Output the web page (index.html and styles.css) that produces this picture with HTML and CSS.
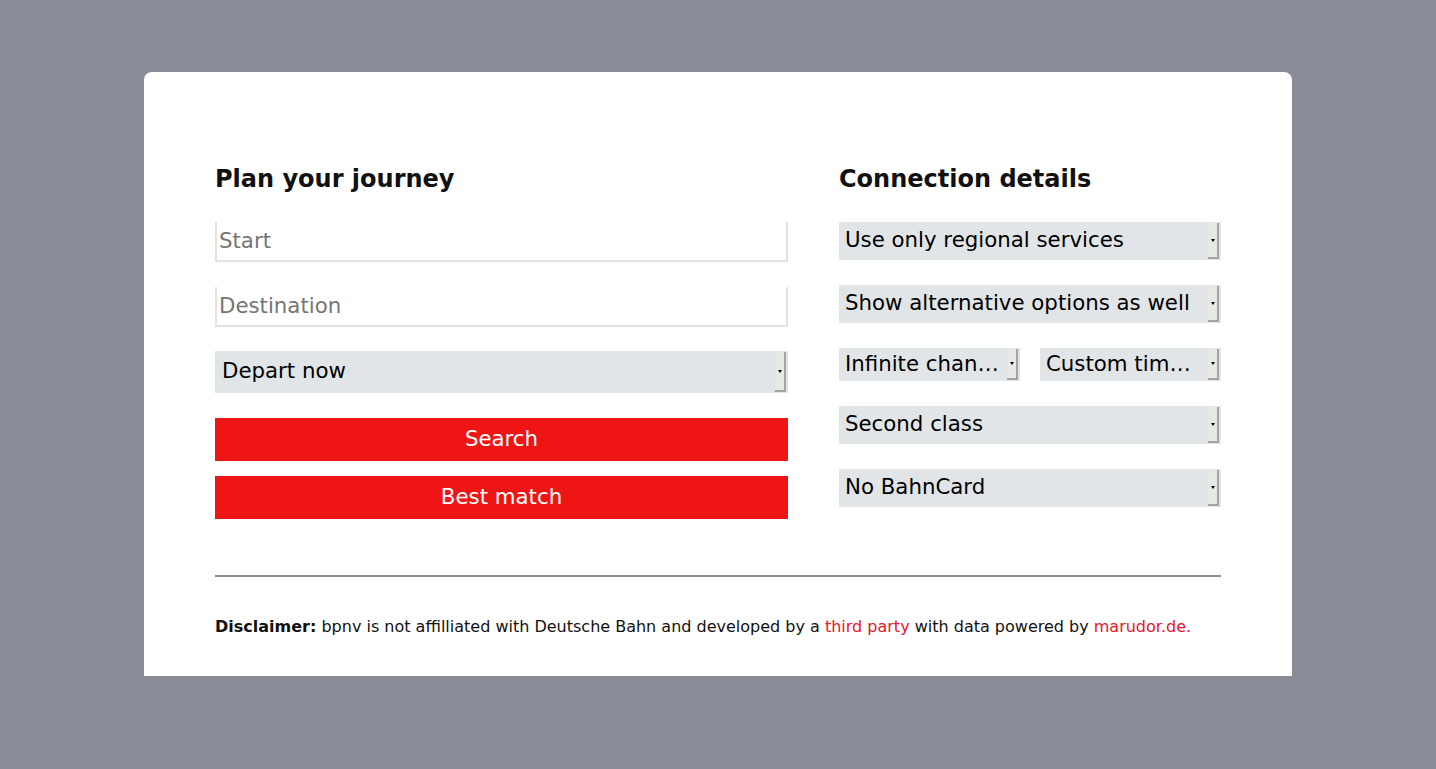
FILE: index.html
```html
<!DOCTYPE html>
<html>
<head>
<meta charset="utf-8">
<link rel="stylesheet" href="styles.css">
</head>
<body>
<main class="card">
  <div class="columns">
    <section class="plan">
      <h2 class="title">Plan your journey</h2>
      <input class="field" type="text" placeholder="Start">
      <input class="field field-last" type="text" placeholder="Destination">
      <div class="dd dd-big"><select class="sel"><option>Depart now</option></select><span class="arrow"></span></div>
      <button class="btn btn-search">Search</button>
      <button class="btn">Best match</button>
    </section>
    <section class="details">
      <h2 class="title">Connection details</h2>
      <div class="dd"><select class="sel"><option>Use only regional services</option></select><span class="arrow"></span></div>
      <div class="dd"><select class="sel"><option>Show alternative options as well</option></select><span class="arrow"></span></div>
      <div class="pair">
        <div class="dd dd-small"><select class="sel"><option>Infinite changes</option></select><span class="arrow"></span></div>
        <div class="dd dd-small"><select class="sel"><option>Custom time to change</option></select><span class="arrow"></span></div>
      </div>
      <div class="dd"><select class="sel"><option>Second class</option></select><span class="arrow"></span></div>
      <div class="dd"><select class="sel"><option>No BahnCard</option></select><span class="arrow"></span></div>
    </section>
  </div>
  <hr class="rule">
  <p class="disclaimer"><b>Disclaimer:</b> bpnv is not affilliated with Deutsche Bahn and developed by a <a href="#">third party</a> with data powered by <a href="#">marudor.de.</a></p>
</main>
</body>
</html>
```
FILE: styles.css
```css
html, body {
  margin: 0;
  padding: 0;
  background: #898c97;
  font-family: "DejaVu Sans", sans-serif;
  height: 100%;
}
body {
  padding-top: 72px;
  box-sizing: border-box;
}
.card {
  width: 1148px;
  margin: 0 auto;
  background: #fff;
  border-radius: 8px 8px 0 0;
  box-sizing: border-box;
  padding: 92px 71px 39px 71px;
}
.columns {
  display: flex;
  gap: 51px;
}
.plan {
  width: 573px;
  display: flex;
  flex-direction: column;
}
.details {
  width: 382px;
  display: flex;
  flex-direction: column;
}
.title {
  margin: 0 0 28px 0;
  font-size: 24px;
  font-weight: bold;
  color: #111;
  line-height: 30px;
}
.field {
  height: 40px;
  box-sizing: border-box;
  border: 2px solid #e3e3e3;
  border-top: none;
  padding: 0 2px 2px 2px;
  font-family: "DejaVu Sans", sans-serif;
  font-size: 21.3px;
  margin-bottom: 25px;
  outline: none;
}
.field-last {
  margin-bottom: 24px;
}
.field::placeholder {
  color: #757575;
}
.dd {
  position: relative;
  height: 38px;
  margin-bottom: 25px;
}
.dd-big {
  height: 42px;
}
.sel {
  -webkit-appearance: none;
  appearance: none;
  display: block;
  width: 100%;
  height: 100%;
  box-sizing: border-box;
  font-family: "DejaVu Sans", sans-serif;
  font-size: 21.3px;
  background: #e1e5e8;
  border: none;
  color: #000;
  margin: 0;
  padding: 0 20px 3px 6px;
  border-radius: 0;
  text-overflow: ellipsis;
  white-space: nowrap;
  overflow: hidden;
}
.dd-big .sel {
  padding-left: 7px;
}
.arrow {
  position: absolute;
  right: 2px;
  top: 1px;
  bottom: 1px;
  width: 9px;
  background: #e8e8e6;
  border-right: 2px solid #a3a3a3;
  border-bottom: 2px solid #a3a3a3;
  pointer-events: none;
  display: flex;
  align-items: center;
  justify-content: center;
}
.arrow::after {
  content: "";
  width: 0;
  height: 0;
  border-left: 2.5px solid transparent;
  border-right: 2.5px solid transparent;
  border-top: 3px solid #000;
}
.pair {
  display: flex;
  gap: 20px;
  margin-bottom: 25px;
}
.dd-small {
  flex: 1;
  min-width: 0;
  height: 33px;
  margin: 0;
}
.btn {
  height: 43px;
  border: none;
  background: #f01515;
  color: #fff;
  font-family: "DejaVu Sans", sans-serif;
  font-size: 21.3px;
  padding: 0 0 2px 0;
  cursor: pointer;
}
.btn-search {
  margin-bottom: 15px;
}
.rule {
  margin: 43px 0 0 0;
  border: none;
  border-top: 2px solid #8c8c8c;
  height: 0;
}
.disclaimer {
  margin: 40px 0 0 0;
  font-size: 16px;
  color: #111;
  line-height: 20px;
}
.disclaimer a {
  color: #e8132c;
  text-decoration: none;
}
```
